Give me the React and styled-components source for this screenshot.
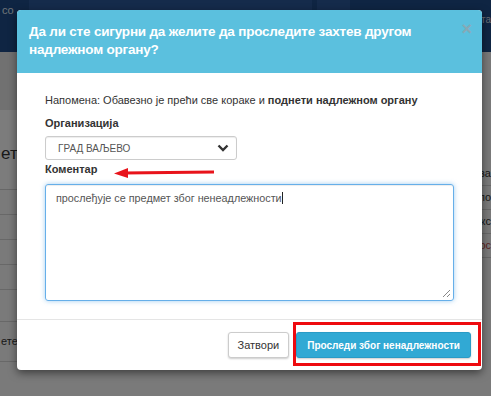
import styled, { createGlobalStyle } from "styled-components";

const GlobalStyle = createGlobalStyle`
  html, body {
    margin: 0;
    padding: 0;
    background: #7a7a7a;
  }
  body {
    font-family: "Liberation Sans", Arial, sans-serif;
  }
`;

const rows = ["", "", "", "", "", "етерминат"];

export default function App() {
  return (
    <>
      <GlobalStyle />
      <Page>
        <TopBar>
          <Brand>co</Brand>
          <SearchBox $w={283} />
          <SearchBox $w={33} />
          <TopRight>та</TopRight>
        </TopBar>
        <Content>
          <Table>
            <HeadRow>етри</HeadRow>
            {rows.map((r, i) => (
              <Row key={i}>{r}</Row>
            ))}
          </Table>
          <RightCol>
            <RightCell>за</RightCell>
            <RightCell>по</RightCell>
            <RightCell>кс</RightCell>
            <RightCell $red>ос</RightCell>
          </RightCol>
        </Content>

        <Backdrop>
          <Modal>
            <Header>
              <Title>
                Да ли сте сигурни да желите да проследите захтев другом
                надлежном органу?
              </Title>
              <Close>×</Close>
            </Header>
            <Body>
              <Note>
                Напомена: Обавезно је прећи све кораке и{" "}
                <b>поднети надлежном органу</b>
              </Note>
              <Label>Организација</Label>
              <Select>
                <span>ГРАД ВАЉЕВО</span>
                <svg width="12" height="8" viewBox="0 0 12 8">
                  <polyline
                    points="1.5,1.5 6,6 10.5,1.5"
                    fill="none"
                    stroke="#333"
                    strokeWidth="2.4"
                  />
                </svg>
              </Select>
              <LabelRow>
                <Label $tight>Коментар</Label>
                <Arrow width="102" height="10" viewBox="0 0 102 10">
                  <line x1="10" y1="5" x2="100" y2="4" stroke="#e8141b" strokeWidth="3" />
                  <polygon points="0,5.5 14,0 14,10" fill="#e8141b" />
                </Arrow>
              </LabelRow>
              <TextArea>
                прослеђује се предмет због ненеадлежности
                <Caret />
                <Grip width="9" height="9" viewBox="0 0 9 9">
                  <line x1="1" y1="8" x2="8" y2="1" stroke="#888" strokeWidth="1" />
                  <line x1="5" y1="8" x2="8" y2="5" stroke="#888" strokeWidth="1" />
                </Grip>
              </TextArea>
            </Body>
            <Footer>
              <Button>Затвори</Button>
              <Highlight>
                <Button $primary>Проследи због ненадлежности</Button>
              </Highlight>
            </Footer>
          </Modal>
        </Backdrop>
      </Page>
    </>
  );
}

const Page = styled.div`
  position: relative;
  width: 491px;
  height: 396px;
  overflow: hidden;
  background: #f4f4f4;
`;

const TopBar = styled.div`
  height: 52px;
  background: #1f4a86;
  display: flex;
  align-items: flex-start;
  gap: 5px;
`;

const Brand = styled.div`
  color: #dfe6ee;
  font-size: 11px;
  padding: 4px 0 0 2px;
  width: 22px;
`;

const SearchBox = styled.div`
  width: ${(p) => p.$w}px;
  height: 34px;
  background: #2a5796;
`;

const TopRight = styled.div`
  margin-left: auto;
  color: #cfd8e4;
  font-size: 10px;
  padding-top: 14px;
`;

const Content = styled.div`
  display: flex;
`;

const Table = styled.div`
  width: 80px;
  display: flex;
  flex-direction: column;
`;

const HeadRow = styled.div`
  height: 138px;
  box-sizing: border-box;
  padding: 92px 0 0 1px;
  font-size: 17px;
  color: #333;
  white-space: nowrap;
  border-bottom: 1px solid #cfcfcf;
  background: linear-gradient(#e2e2e2 0 58px, #f9f9f9 58px);
`;

const Row = styled.div`
  height: 25px;
  box-sizing: border-box;
  border-bottom: 1px solid #d0d0d0;
  font-size: 11px;
  color: #333;
  line-height: 30px;
  white-space: nowrap;
  &:nth-child(6) {
    height: 32px;
  }
  &:nth-child(7) {
    height: 40px;
    line-height: 38px;
    padding-left: 1px;
  }
`;

const RightCol = styled.div`
  margin-left: auto;
  width: 40px;
  padding-top: 110px;
  display: flex;
  flex-direction: column;
`;

const RightCell = styled.div`
  height: 23px;
  border-bottom: 1px solid #d0d0d0;
  font-size: 11px;
  line-height: 22px;
  text-align: right;
  color: ${(p) => (p.$red ? "#b94a48" : "#333")};
`;

const Backdrop = styled.div`
  position: absolute;
  inset: 0;
  background: rgba(0, 0, 0, 0.5);
  padding: 10px 0 0 17px;
`;

const Modal = styled.div`
  width: 465px;
  background: #fff;
  border-radius: 4px;
  overflow: hidden;
  box-shadow: 0 3px 9px rgba(0, 0, 0, 0.5);
`;

const Header = styled.div`
  background: #5bc0de;
  height: 63px;
  box-sizing: border-box;
  padding: 13px 12px 0 12px;
  display: flex;
  align-items: flex-start;
`;

const Title = styled.div`
  flex: 1;
  color: #fff;
  font-weight: bold;
  font-size: 13.5px;
  letter-spacing: -0.2px;
  line-height: 18px;
  padding-right: 20px;
`;

const Close = styled.div`
  color: #86a9b6;
  font-size: 18px;
  line-height: 14px;
  font-weight: bold;
  margin-right: -2px;
  margin-top: -1px;
`;

const Body = styled.div`
  padding: 19px 27px 18px 28px;
  display: flex;
  flex-direction: column;
  align-items: flex-start;
`;

const Note = styled.div`
  font-size: 11px;
  color: #333;
  line-height: 16px;
  b {
    font-weight: bold;
    color: #333;
  }
`;

const Label = styled.div`
  font-size: 11px;
  font-weight: bold;
  color: #333;
  line-height: 16px;
  margin-top: ${(p) => (p.$tight ? "0" : "7px")};
  margin-bottom: ${(p) => (p.$tight ? "0" : "5px")};
`;

const LabelRow = styled.div`
  display: flex;
  align-items: center;
  margin-bottom: 6px;
`;

const Arrow = styled.svg`
  margin-left: 17px;
  margin-top: 8px;
`;

const Select = styled.div`
  width: 192px;
  height: 24px;
  box-sizing: border-box;
  border: 1px solid #ccc;
  border-radius: 3px;
  display: flex;
  align-items: center;
  justify-content: space-between;
  padding: 0 7px 0 12px;
  font-size: 10px;
  color: #555;
  box-shadow: inset 0 1px 1px rgba(0, 0, 0, 0.075);
`;

const TextArea = styled.div`
  position: relative;
  width: 409px;
  height: 117px;
  box-sizing: border-box;
  border: 1px solid #66afe9;
  border-radius: 3px;
  box-shadow: inset 0 1px 1px rgba(0, 0, 0, 0.075), 0 0 5px rgba(102, 175, 233, 0.6);
  padding: 6px 10px;
  font-size: 10.8px;
  color: #555;
  line-height: 14px;
`;

const Caret = styled.span`
  display: inline-block;
  width: 1px;
  height: 12px;
  background: #222;
  vertical-align: -2px;
`;

const Grip = styled.svg`
  position: absolute;
  right: 2px;
  bottom: 2px;
`;

const Footer = styled.div`
  border-top: 1px solid #e5e5e5;
  padding: 12px 11px 12px 12px;
  display: flex;
  justify-content: flex-end;
  align-items: center;
  gap: 7px;
`;

const Highlight = styled.div`
  position: relative;
  &::after {
    content: "";
    position: absolute;
    left: -3px;
    right: -10px;
    top: -10px;
    bottom: -8px;
    border: 3px solid #ee0a0f;
  }
`;

const Button = styled.div`
  height: 26px;
  box-sizing: border-box;
  display: flex;
  align-items: center;
  padding: 0 ${(p) => (p.$primary ? "10px" : "9px")};
  border-radius: 3px;
  font-size: ${(p) => (p.$primary ? "10px" : "11px")};
  font-weight: ${(p) => (p.$primary ? "bold" : "normal")};
  color: ${(p) => (p.$primary ? "#fff" : "#333")};
  background: ${(p) => (p.$primary ? "#31a9d4" : "#fff")};
  border: 1px solid ${(p) => (p.$primary ? "#2a9bc6" : "#ccc")};
  box-shadow: 0 1px 2px rgba(0, 0, 0, 0.2);
`;
